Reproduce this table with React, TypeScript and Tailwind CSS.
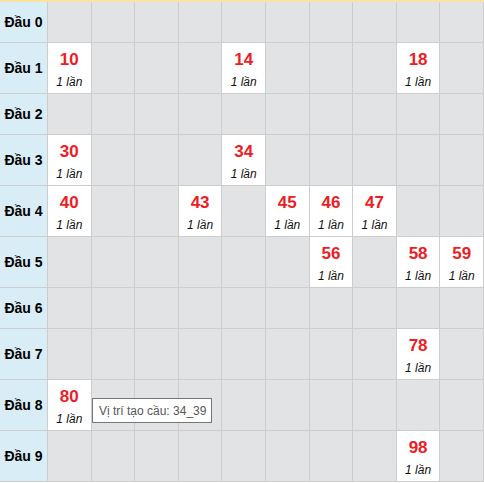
import React from "react";

const rows: number[][] = [
  [],
  [10, 14, 18],
  [],
  [30, 34],
  [40, 43, 45, 46, 47],
  [56, 58, 59],
  [],
  [78],
  [80],
  [98],
];

const App = () => {
  return (
    <div
      className="relative w-[484px] h-[483px] bg-white overflow-hidden"
      style={{ fontFamily: '"Liberation Sans", Arial, sans-serif' }}
    >
      <div className="border-t-2 border-[#fbe3a3] bg-[#cdcdcd] flex flex-col gap-px pb-px pr-px">
        {rows.map((nums, r) => (
          <div
            key={r}
            className={`grid grid-cols-[47px_repeat(10,1fr)] gap-px ${nums.length ? "h-[50px]" : "h-[40px]"}`}
          >
            <div className="bg-[#d9edf7] flex items-center justify-center text-[14px] font-bold text-black">
              Đầu {r}
            </div>
            {Array.from({ length: 10 }).map((_, c) => {
              const n = r * 10 + c;
              const has = nums.includes(n);
              return has ? (
                <div key={c} className="bg-white flex flex-col items-center pt-[8px]">
                  <span className="text-[17px] leading-[17px] font-bold text-[#ee1c25]">{n}</span>
                  <span className="text-[12px] leading-[14px] italic text-[#111] mt-[7px]">1 lần</span>
                </div>
              ) : (
                <div key={c} className="bg-[#e2e3e5]" />
              );
            })}
          </div>
        ))}
      </div>

      {/* tooltip */}
      <div className="absolute left-[92px] top-[398px] w-[120px] h-[25px] border border-[#767676] bg-white flex items-center pl-[6px] text-[12px] text-[#575757] whitespace-nowrap">
        Vị trí tạo cầu: 34_39
      </div>
    </div>
  );
};

export default App;
